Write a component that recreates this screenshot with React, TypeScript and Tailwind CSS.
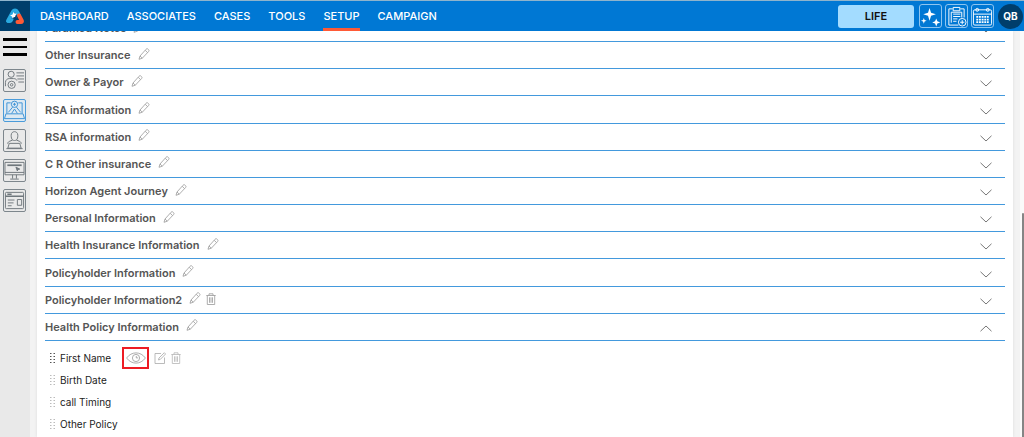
import React from 'react';

type Section = { title: string; removable?: boolean; open?: boolean };

const navItems = ['DASHBOARD', 'ASSOCIATES', 'CASES', 'TOOLS', 'SETUP', 'CAMPAIGN'];

const sections: Section[] = [
  { title: 'Paramed Notes' },
  { title: 'Other Insurance' },
  { title: 'Owner & Payor' },
  { title: 'RSA information' },
  { title: 'RSA information' },
  { title: 'C R Other insurance' },
  { title: 'Horizon Agent Journey' },
  { title: 'Personal Information' },
  { title: 'Health Insurance Information' },
  { title: 'Policyholder Information' },
  { title: 'Policyholder Information2', removable: true },
  { title: 'Health Policy Information', open: true },
];

const fields = ['First Name', 'Birth Date', 'call Timing', 'Other Policy'];

const Logo = () => (
  <svg viewBox="0 0 20 18" className="w-5 h-[18px]" fill="none" strokeLinejoin="round">
    <path d="M3 14 8.200 4.500C9 3 11 3 11.800 4.500L13.500 7.500" stroke="#29a9e0" strokeWidth="4" strokeLinecap="round" />
    <path d="M3.500 14.500c2.500.8 3.500-1 4-3" stroke="#29a9e0" strokeWidth="2.500" />
    <path d="m14 8.500 2.800 5.200c.4.800 0 1.300-.8 1.300h-3.500" stroke="#ff5a36" strokeWidth="4" strokeLinecap="round" />
    <path d="m8.500 5 1 1.500h2l-1 2 1 2-2.500-.5-1.500 1.500-.5-2L5 8.500l2.500-1Z" fill="#fff" />
    <path d="m10.500 8.500 2 4-3.500.5Z" fill="#003e6b" />
  </svg>
);

const Pencil = () => (
  <svg viewBox="0 0 12 12" className="w-3 h-3" fill="none" stroke="#999" strokeWidth=".8" strokeLinejoin="round">
    <path d="M1 11.300 2 8 8 1.300c.5-.6 1.200-.8 1.900-.3l.7.700c.6.600.5 1.200 0 1.800L4.300 10.200 1 11.300Z" />
    <path d="m2 8 2.300 2.200M7.200 2.300l2.300 2.200" />
  </svg>
);

const Trash = ({ faded }: { faded?: boolean }) => (
  <svg viewBox="0 0 10 12" className="w-[10px] h-3" fill="none" stroke={faded ? '#b5b5b5' : '#999'} strokeWidth=".8">
    <path d="M.3 2.500h9.400M3 2.500V.8h4v1.700M1.300 2.500v9h7.400v-9M3.500 4.300v5.500M5 4.300v5.500M6.500 4.300v5.500" />
  </svg>
);

const Eye = () => (
  <svg viewBox="0 0 20 12" className="w-5 h-3 shrink-0" fill="none" stroke="#999" strokeWidth=".8">
    <path d="M.6 6C5.500-.8 14.500-.8 19.400 6 14.500 12.800 5.500 12.800.6 6Z" />
    <circle cx="10" cy="6" r="3.600" />
    <path d="M10.300 4v1.900h1.800" />
  </svg>
);

const EditBox = () => (
  <svg viewBox="0 0 12 12" className="w-3 h-3" fill="none" stroke="#aaa" strokeWidth=".8">
    <path d="M7 1.500H1v10h9.500v-6M4.500 8l.5-2L10.300.7l1.300 1.300-5.200 5.300L4.500 8Z" />
  </svg>
);

const Chevron = ({ up }: { up?: boolean }) => (
  <svg viewBox="0 0 12 7" className="w-3 h-[7px]" fill="none" stroke="#777" strokeWidth="1">
    <path d={up ? 'M.5 6.200 6 1l5.500 5.200' : 'M.5.800 6 6 11.500.800'} />
  </svg>
);

const Grip = ({ active }: { active: boolean }) => (
  <svg viewBox="0 0 5 10" className={active ? 'w-[5px] h-[10px] text-[#555]' : 'w-[5px] h-[10px] text-[#bbb]'} fill="currentColor">
    <path d="M0 0h1.500v1H0zM3.500 0H5v1H3.500zM0 3h1.500v1H0zM3.500 3H5v1H3.500zM0 6h1.500v1H0zM3.500 6H5v1H3.500zM0 9h1.500v1H0zM3.500 9H5v1H3.500z" />
  </svg>
);

const sideIcons = [
  {
    label: 'Contacts',
    drawing: (
      <>
        <circle cx="8.500" cy="5.500" r="3.200" />
        <path d="M2.500 18v-4c0-2.500 2-4 4-4H11c2 0 3 .8 3.500 2M14 4h8M14 7.200h8M15 10.400h7M16 13.600h6" />
        <circle cx="9" cy="16.500" r="3.800" />
        <circle cx="9" cy="16.500" r="1.300" />
      </>
    ),
  },
  {
    label: 'Setup',
    active: true,
    drawing: (
      <>
        <path d="M4 15V4h4M16 4h4v11M3 15.500h18l1.500 5h-21l1.500-5Z" />
        <circle cx="12" cy="5.500" r="3.300" />
        <path d="M10.500 5.500h3M12 4v3M10 8.500 5.500 14M14 8.500l4.500 5.500M9 15l3-4.500 3 4.500" />
      </>
    ),
  },
  {
    label: 'Users',
    drawing: (
      <>
        <path d="M8.500 6.500c0-5 7-5 7 0s-2 5.500-3.500 5.500-3.500-.5-3.500-5.500ZM10 11.500 6.500 13c-1 .5-1.500 1-1.500 2.500M14 11.500l3.500 1.500c1 .5 1.500 1 1.500 2.500" />
        <path d="M6.500 15h11l1.500 5H5ZM3.500 20.500h17" />
      </>
    ),
  },
  {
    label: 'Display',
    drawing: (
      <>
        <path d="M2 3.500h20v13H2zM2 14h20M10 16.500v4M14 16.500v4M7.500 21h9" />
        <path d="M4.500 6.500h15" strokeWidth="1.800" />
        <path d="m13.500 8.500 4 2-2 .5-.5 1.500Z" fill="currentColor" />
      </>
    ),
  },
  {
    label: 'Pages',
    drawing: (
      <>
        <rect x="2.500" y="3.500" width="19" height="17" rx="1" />
        <path d="M2.500 7.500h19M4.500 5.500H9" strokeWidth="1.600" />
        <path d="M5 11.500h7M5 14.500h6M5 17.500h4M15 11h4.500v6H15z" />
      </>
    ),
  },
];

const topIcons = [
  {
    label: 'Assistant',
    drawing: (
      <path
        fill="currentColor"
        stroke="none"
        d="M11 3 12.600 8l5 1.600-5 1.600L11 16.500l-1.600-5.300-5-1.600 5-1.600ZM5 13.500l.8 2.200 2.200.8-2.200.8-.8 2.200-.8-2.200L2 16.500l2.200-.8ZM18 14l1.200 3 3 1.200-3 1.200-1.200 3-1.200-3-3-1.200 3-1.200Z"
      />
    ),
  },
  {
    label: 'Add task',
    drawing: (
      <>
        <path d="M8 4H4v17h10M16 4h4v9M8.500 2.500h7V6h-7zM6.500 18.500V7.500h11V13" />
        <path d="M8.500 9.500H16M8.500 12H16M8.500 14.500h4.500M8.500 17h3.500" />
        <circle cx="18" cy="18" r="4" />
        <path d="M18 15.800v4.400M15.800 18h4.400" />
      </>
    ),
  },
  {
    label: 'Calendar',
    drawing: (
      <>
        <rect x="2.500" y="5" width="19" height="16" rx="1.500" />
        <path d="M2.500 9.500h19" />
        <circle cx="6.500" cy="5" r="1.500" />
        <circle cx="17.500" cy="5" r="1.500" />
        <path d="M5.500 12.500h13M5.500 15.200h13M5.500 18h13" strokeWidth="1.800" strokeDasharray="2 .8" />
      </>
    ),
  },
];

const Header = () => (
  <header className="relative z-10 flex h-[31px] shrink-0 items-stretch border-t border-[#8fb4cc] bg-[#0078d4]">
    <a href="#" aria-label="Home" className="flex w-[30px] items-center justify-center bg-[#003e6b]">
      <Logo />
    </a>
    <nav className="flex flex-1 gap-[18px] pl-[10px] text-[11px] leading-3 font-medium text-white">
      {navItems.map((item) => (
        <a
          key={item}
          href="#"
          className={
            item === 'SETUP'
              ? 'flex items-center border-b-3 border-[#ff5a36] pt-[3px]'
              : 'flex items-center'
          }
        >
          {item}
        </a>
      ))}
    </nav>
    <div className="flex items-center pr-px">
      <button className="mr-[5px] h-[23px] w-[76px] rounded-[3px] bg-[#a3dcff] text-[11px] font-semibold text-[#111]">
        LIFE
      </button>
      <div className="flex gap-[3px]">
        {topIcons.map((icon) => (
          <button
            key={icon.label}
            aria-label={icon.label}
            className="flex h-6 w-[23px] items-center justify-center rounded-[3px] border border-[#8ec5f0] text-white"
          >
            <svg viewBox="1 1 22 22" className="h-[21px] w-[21px]" fill="none" stroke="currentColor" strokeWidth="1">
              {icon.drawing}
            </svg>
          </button>
        ))}
      </div>
      <button className="ml-1 h-[25px] w-[25px] rounded-full bg-[#003e6b] text-[10px] font-bold text-white">
        QB
      </button>
    </div>
  </header>
);

const Sidebar = () => (
  <aside className="flex w-[30px] shrink-0 flex-col items-start bg-[#e9e9e9] pt-[7px] pl-[3px]">
    <button aria-label="Menu" className="mb-[13px] flex flex-col gap-[5px]">
      <span className="h-[3px] w-6 bg-black" />
      <span className="h-[2px] w-6 bg-black" />
      <span className="h-[3px] w-6 bg-black" />
    </button>
    <div className="flex flex-col gap-[7px]">
      {sideIcons.map((icon) => (
        <button
          key={icon.label}
          aria-label={icon.label}
          className={
            icon.active
              ? 'flex h-[23px] w-[23px] items-center justify-center rounded-[2px] border border-[#4a9bd9] bg-[#dde9f2] text-[#3c92d6]'
              : 'flex h-[23px] w-[23px] items-center justify-center rounded-[2px] border border-[#7d868c] text-[#6f777c]'
          }
        >
          <svg viewBox="1 1 22 22" className="h-[21px] w-[21px]" fill="none" stroke="currentColor" strokeWidth="1">
            {icon.drawing}
          </svg>
        </button>
      ))}
    </div>
  </aside>
);

const App = () => {
  return (
    <div className="flex h-screen flex-col overflow-hidden bg-[#f3f3f3] font-['Inter','Liberation_Sans',sans-serif]">
      <Header />
      <div className="flex min-h-0 flex-1">
        <Sidebar />
        <main className="ml-[7px] min-w-0 flex-1 bg-white px-2 shadow-[0_0_3px_#ddd]">
          {/* Scrolled list of sections */}
          <ul className="-mt-4 grid h-[326px] auto-rows-fr">
            {sections.map((section, i) => (
              <li key={i} className="flex items-center border-b border-[#4399dd]">
                <h2 className="text-[11px] leading-3 font-semibold text-[#555]">{section.title}</h2>
                <button aria-label={`Edit ${section.title}`} className="mb-[3px] ml-[7px]">
                  <Pencil />
                </button>
                {section.removable && (
                  <button aria-label={`Delete ${section.title}`} className="mb-[2px] ml-[5px]">
                    <Trash />
                  </button>
                )}
                <button aria-label={`Toggle ${section.title}`} className="mr-[13px] ml-auto pt-[3px]">
                  <Chevron up={section.open} />
                </button>
              </li>
            ))}
          </ul>

          {/* Fields of the open section */}
          <ul className="pt-[6px] pl-[5px]">
            {fields.map((field, i) => (
              <li key={field} className="flex h-[22px] items-center">
                <Grip active={i === 0} />
                <span className="ml-[5px] text-[10px] text-[#222]">{field}</span>
                {i === 0 && (
                  <div className="ml-[11px] flex items-center gap-[5px]">
                    <button
                      aria-label={`Preview ${field}`}
                      className="flex h-[22px] w-[27px] items-center justify-center border-2 border-[#ed1c24]"
                    >
                      <Eye />
                    </button>
                    <button aria-label={`Edit ${field}`}>
                      <EditBox />
                    </button>
                    <button aria-label={`Delete ${field}`}>
                      <Trash faded />
                    </button>
                  </div>
                )}
              </li>
            ))}
          </ul>
        </main>
        {/* Scroll track */}
        <div className="ml-[7px] flex w-1 flex-col items-end bg-[#fafafa] pt-[182px]">
          <div className="w-[2px] flex-1 rounded-t bg-[#858585]" />
        </div>
      </div>
    </div>
  );
};

export default App;
